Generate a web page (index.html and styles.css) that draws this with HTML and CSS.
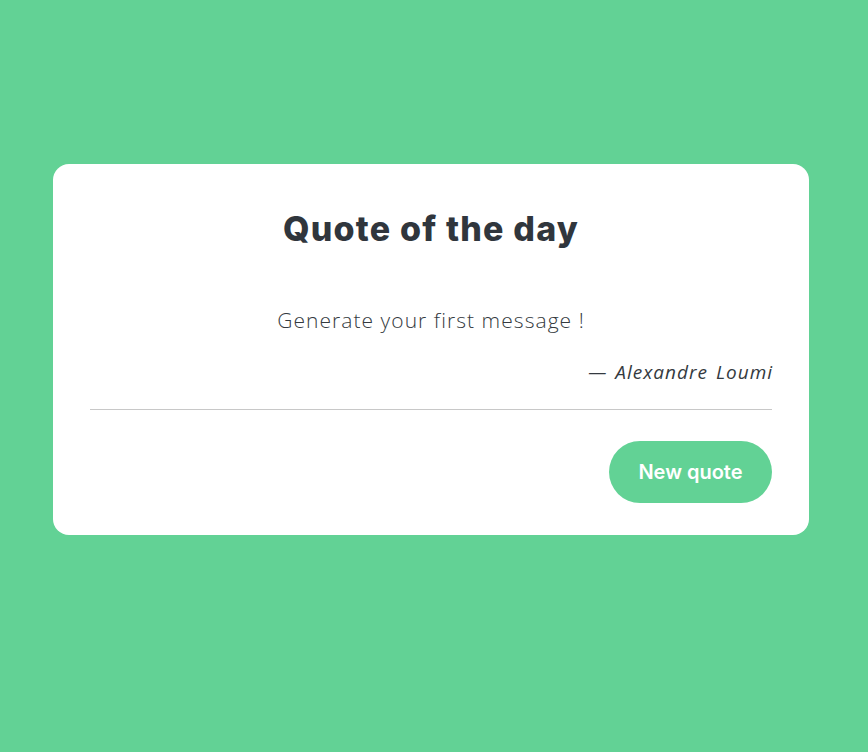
FILE: index.html
```html
<!DOCTYPE html>
<html lang="en">
<head>
<meta charset="utf-8">
<title>Quote of the day</title>
<link rel="stylesheet" href="styles.css">
</head>
<body>
<main class="page">
  <section class="card">
    <h1 class="title">Quote of the day</h1>
    <p class="quote">Generate your first message !</p>
    <p class="author">— Alexandre Loumi</p>
    <hr class="divider">
    <div class="actions">
      <button class="btn" type="button">New quote</button>
    </div>
  </section>
</main>
</body>
</html>
```
FILE: styles.css
```css
html, body {
  margin: 0;
  padding: 0;
  background: #62d295;
}
.page {
  padding: 164px 59px 0 53px;
  min-height: 752px;
  box-sizing: border-box;
}
.card {
  width: 756px;
  height: 371px;
  box-sizing: border-box;
  background: #ffffff;
  border-radius: 16px;
  padding: 43px 37px 0 37px;
  display: flex;
  flex-direction: column;
  color: #343a40;
}
.title {
  margin: 0;
  text-align: center;
  font-family: "Inter", "DejaVu Sans", sans-serif;
  font-weight: 800;
  font-size: 34px;
  line-height: 44px;
  letter-spacing: 1.2px;
  color: #30363d;
}
.quote {
  margin: 55px 0 0 0;
  text-align: center;
  font-family: "Open Sans", "Lato", sans-serif;
  font-weight: 300;
  font-size: 21px;
  line-height: 28px;
  letter-spacing: 1.05px;
  color: #343a40;
}
.author {
  margin: 26px -1px 0 0;
  text-align: right;
  font-family: "Open Sans", "Lato", sans-serif;
  font-style: italic;
  font-weight: 400;
  font-size: 19px;
  line-height: 24px;
  letter-spacing: 1px;
  word-spacing: 2px;
  color: #343a40;
}
.divider {
  margin: 25px 0 0 0;
  border: 0;
  border-top: 1px solid #c8c8c8;
  height: 0;
}
.actions {
  display: flex;
  justify-content: flex-end;
  margin-top: 31px;
}
.btn {
  width: 163px;
  height: 62px;
  border: 0;
  border-radius: 31px;
  background: #62d295;
  color: #ffffff;
  font-family: "Inter", "DejaVu Sans", sans-serif;
  font-weight: 600;
  font-size: 20px;
  cursor: pointer;
}
```
